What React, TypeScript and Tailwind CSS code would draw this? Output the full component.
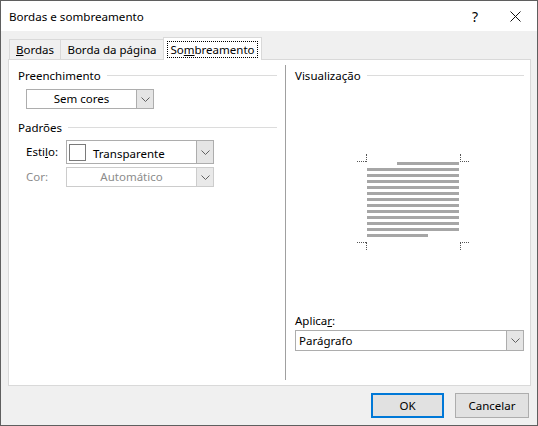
import React from 'react';

const font = { fontFamily: '"Noto Sans", "Open Sans", sans-serif' };

function Chevron() {
  return (
    <svg width="9" height="5" viewBox="0 0 9 5" className="block">
      <path d="M0.5 0.5 L4.5 4.5 L8.5 0.5" fill="none" stroke="#606060" strokeWidth="1" />
    </svg>
  );
}

function ArrowBox({ disabled }: { disabled?: boolean }) {
  return (
    <div className={`w-[17px] self-stretch flex items-center justify-center border-l ${disabled ? 'bg-[#e9e9e9] border-[#cccccc]' : 'bg-[#e5e5e5] border-[#adadad]'}`}>
      <Chevron />
    </div>
  );
}

function GroupTitle({ text }: { text: string }) {
  return (
    <div className="flex items-center gap-[6px]">
      <span className="leading-[15px] text-black whitespace-nowrap">{text}</span>
      <div className="flex-1 h-px bg-[#dcdcdc]" />
    </div>
  );
}

function Corner({ pos }: { pos: 'tl' | 'tr' | 'bl' | 'br' }) {
  const dot = 'border-[#555555] border-dotted';
  const h = `absolute w-[9px] h-0 border-t ${dot}`;
  const v = `absolute w-0 h-[8px] border-l ${dot}`;
  if (pos === 'tl')
    return (
      <>
        <div className={`${h} left-[357px] top-[161px]`} />
        <div className={`${v} left-[366px] top-[154px]`} />
      </>
    );
  if (pos === 'tr')
    return (
      <>
        <div className={`${h} left-[460px] top-[161px]`} />
        <div className={`${v} left-[460px] top-[154px]`} />
      </>
    );
  if (pos === 'bl')
    return (
      <>
        <div className={`${h} left-[357px] top-[242px]`} />
        <div className={`${v} left-[366px] top-[242px]`} />
      </>
    );
  return (
    <>
      <div className={`${h} left-[460px] top-[242px]`} />
      <div className={`${v} left-[460px] top-[242px]`} />
    </>
  );
}

export default function App() {
  const lines = [0, 1, 2, 3, 4, 5, 6, 7, 8, 9, 10];
  return (
    <div style={font} className="relative w-[538px] h-[426px] flex flex-col border border-[#5f5f5f] bg-[#f0f0f0] text-[11.5px] text-black overflow-hidden">
      {/* title bar */}
      <div className="h-[30px] bg-white flex items-center pl-[8px] shrink-0">
        <span className="flex-1 leading-[15px] text-[11.6px]">Bordas e sombreamento</span>
        <span className="w-[20px] text-center text-[14px] mr-[25px]">?</span>
        <svg width="11" height="11" viewBox="0 0 11 11" className="mr-[16px]">
          <path d="M0.5 0.5 L10.5 10.5 M10.5 0.5 L0.5 10.5" stroke="#111" strokeWidth="1" />
        </svg>
      </div>

      {/* body */}
      <div className="flex-1 flex flex-col px-[7px] pt-[7px]">
        {/* tabs */}
        <div className="flex items-end h-[21px] pl-[1px] relative z-10">
          <div className="w-[52px] h-[20px] flex items-center justify-center border border-b-0 border-[#d9d9d9] bg-[#f0f0f0]">
            <span><u>B</u>ordas</span>
          </div>
          <div className="w-[103px] h-[20px] flex items-center justify-center border border-b-0 border-l-0 border-[#d9d9d9] bg-[#f0f0f0]">
            <span>Borda da pá<u>g</u>ina</span>
          </div>
          <div className="w-[99px] h-[23px] flex items-center justify-center border border-b-0 border-[#d9d9d9] bg-white -mb-px ml-[-1px]">
            <span className="px-[2px] leading-[15px] border border-dotted border-black">So<u>m</u>breamento</span>
          </div>
        </div>

        {/* panel */}
        <div className="w-[523px] h-[327px] bg-white border border-[#d9d9d9] grid grid-cols-[276px_1fr]">
          {/* left */}
          <div className="flex flex-col pl-[9px] pr-[8px] pt-[8px]">
            <GroupTitle text="Preenchimento" />
            <div className="mt-[6px] ml-[8px] w-[128px] h-[20px] flex border border-[#adadad] bg-white">
              <div className="flex-1 flex items-center justify-center">Sem cores</div>
              <ArrowBox />
            </div>
            <div className="mt-[11px]">
              <GroupTitle text="Padrões" />
            </div>
            <div className="mt-[5px] flex items-center ml-[8px]">
              <span className="w-[40px]">Esti<u>l</u>o:</span>
              <div className="w-[148px] h-[24px] flex border border-[#adadad] bg-white">
                <div className="flex-1 flex items-center pl-[2px]">
                  <div className="w-[17px] h-[17px] border border-[#7a7a7a] bg-white" />
                  <span className="ml-[7px] mt-[3px]">Transparente</span>
                </div>
                <ArrowBox />
              </div>
            </div>
            <div className="mt-[3px] flex items-center ml-[8px]">
              <span className="w-[40px] text-[#8c8c8c]">Cor:</span>
              <div className="w-[148px] h-[20px] flex border border-[#cccccc] bg-white">
                <div className="flex-1 flex items-center justify-center text-[#8c8c8c]">Automático</div>
                <ArrowBox disabled />
              </div>
            </div>
          </div>

          {/* right */}
          <div className="relative flex flex-col pt-[3px] pl-[9px] pr-[7px] border-l border-[#a0a0a0] mb-[5px] mt-[5px]">
            <GroupTitle text="Visualização" />
            <div className="flex-1" />
            <div className="leading-[15px]">Aplica<u>r</u>:</div>
            <div className="mt-[2px] mb-[29px] w-[229px] h-[21px] flex border border-[#adadad] bg-white">
              <div className="flex-1 flex items-center pl-[3px]">Parágrafo</div>
              <ArrowBox />
            </div>
          </div>
        </div>

        {/* buttons */}
        <div className="flex justify-end gap-[11px] mt-[7px] pr-[1px]">
          <button className="w-[73px] h-[25px] border-2 border-[#0078d7] bg-[#e1e1e1]">OK</button>
          <button className="w-[74px] h-[25px] border border-[#adadad] bg-[#e1e1e1]">Cancelar</button>
        </div>
      </div>

      {/* preview drawing over the panel */}
      <div className="absolute left-[-1px] top-[-1px] w-[538px] h-[426px] pointer-events-none">
        <div className="absolute left-[397px] top-[162px] w-[62px] h-[3px] bg-[#a6a6a6]" />
        {lines.map((i) => (
          <div key={i} className="absolute left-[367px] w-[92px] h-[3px] bg-[#a6a6a6]" style={{ top: 168 + i * 6 }} />
        ))}
        <div className="absolute left-[367px] top-[234px] w-[61px] h-[3px] bg-[#a6a6a6]" />
        <Corner pos="tl" />
        <Corner pos="tr" />
        <Corner pos="bl" />
        <Corner pos="br" />
      </div>
    </div>
  );
}
